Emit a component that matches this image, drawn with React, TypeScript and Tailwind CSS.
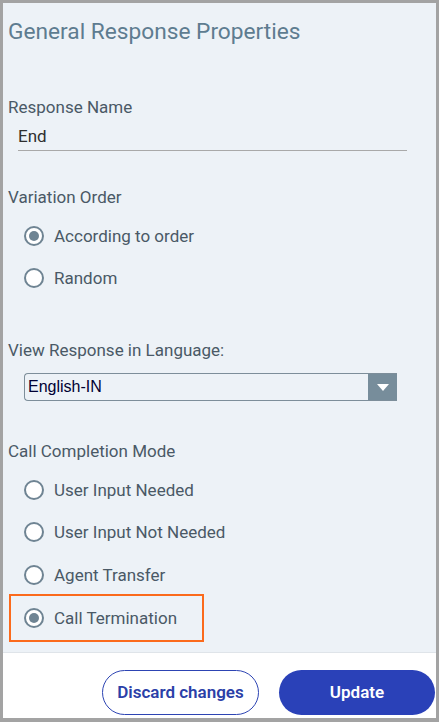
import React from "react";

function Radio({ checked }: { checked?: boolean }) {
  return (
    <span className="flex h-5 w-5 shrink-0 items-center justify-center rounded-full border-2 border-[#6f8493] bg-white">
      {checked ? <span className="block h-[10px] w-[10px] rounded-full bg-[#6f8493]" /> : null}
    </span>
  );
}

function RadioRow({ label, checked }: { label: string; checked?: boolean }) {
  return (
    <div className="flex h-6 items-center gap-[10px]">
      <Radio checked={checked} />
      <span className="text-[17px] leading-6 text-[#4a5966]">{label}</span>
    </div>
  );
}

export default function App() {
  return (
    <div
      className="flex h-[722px] w-[439px] flex-col border-[3px] border-b-4 border-[#a3a3a3] bg-white"
      style={{ fontFamily: "Roboto, 'Noto Sans', sans-serif" }}
    >
      <div className="flex h-[649px] shrink-0 flex-col bg-[#edf2f7] pt-[15px]">
        <h1 className="pl-[5px] text-[22.7px] font-normal leading-7 text-[#5e7c90]">
          General Response Properties
        </h1>

        <div className="mt-[49px] pl-[5px] text-[17px] leading-6 text-[#4a5966]">Response Name</div>
        <div className="ml-[15px] mt-[5px] flex h-[27px] w-[389px] items-center border-b border-[#a9a9a9] text-[17px] text-[#2f2f2f]">
          End
        </div>

        <div className="mt-[34px] pl-[5px] text-[17px] leading-6 text-[#4a5966]">Variation Order</div>
        <div className="ml-[21px] mt-[15px] flex flex-col gap-[18px]">
          <RadioRow label="According to order" checked />
          <RadioRow label="Random" />
        </div>

        <div className="mt-[48px] pl-[5px] text-[17px] leading-6 text-[#4a5966]">View Response in Language:</div>
        <div className="ml-[21px] mt-[11px] flex h-[28px] w-[373px] overflow-hidden rounded-l-[4px] border border-r-0 border-[#7d8e9a]">
          <div
            className="flex flex-1 items-center pl-[3px] text-[16px] text-[#000033]"
            style={{ fontFamily: "'Liberation Sans', Arial, sans-serif" }}
          >
            English-IN
          </div>
          <div className="flex w-[29px] items-center justify-center bg-[#778d9b]">
            <svg width="12" height="7" viewBox="0 0 12 7">
              <path d="M0 0 L12 0 L6 7 Z" fill="#ffffff" />
            </svg>
          </div>
        </div>

        <div className="mt-[38px] pl-[5px] text-[17px] leading-6 text-[#4a5966]">Call Completion Mode</div>
        <div className="ml-[21px] mt-[15px]">
          <RadioRow label="User Input Needed" />
        </div>
        <div className="ml-[21px] mt-[18px]">
          <RadioRow label="User Input Not Needed" />
        </div>
        <div className="ml-[21px] mt-[19px]">
          <RadioRow label="Agent Transfer" />
        </div>
        <div className="ml-[6px] mt-[7px] flex h-[48px] w-[195px] items-center border-2 border-[#fb6a1c] pl-[13px]">
          <RadioRow label="Call Termination" checked />
        </div>
      </div>

      <div className="flex flex-1 items-start justify-end gap-5 border-t border-[#dfe4e9] pr-px pt-[17px]">
        <button className="h-[45px] w-[157px] rounded-full border border-[#2d44b3] bg-white text-[17px] font-semibold text-[#2b3fa8]">
          Discard changes
        </button>
        <button className="h-[45px] w-[156px] rounded-full bg-[#2a41b8] text-[17px] font-semibold text-white">
          Update
        </button>
      </div>
    </div>
  );
}
